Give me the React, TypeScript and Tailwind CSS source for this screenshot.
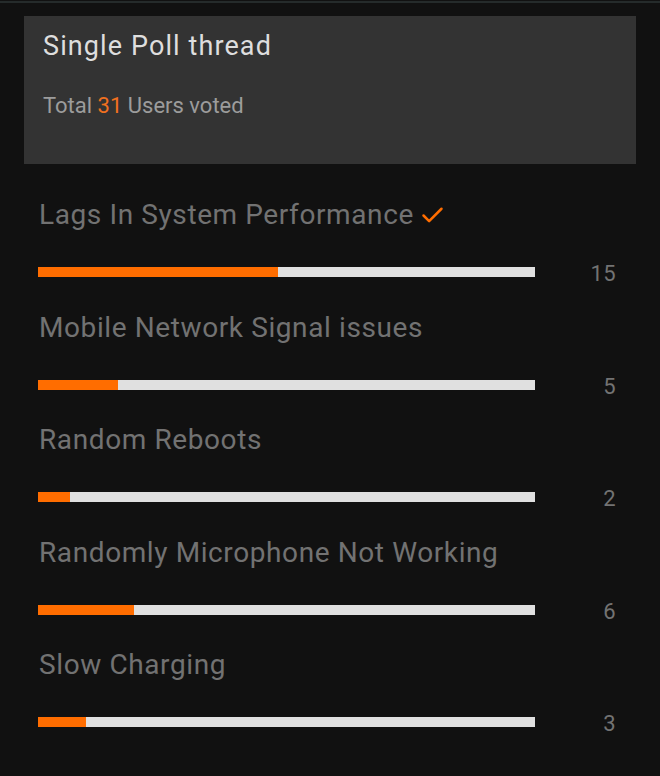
import { Check } from "lucide-react";

const OPTIONS = [
  { label: "Lags In System Performance", votes: 15, voted: true },
  { label: "Mobile Network Signal issues", votes: 5, voted: false },
  { label: "Random Reboots", votes: 2, voted: false },
  { label: "Randomly Microphone Not Working", votes: 6, voted: false },
  { label: "Slow Charging", votes: 3, voted: false },
];

const TOTAL = 31;

export default function App() {
  return (
    <div className="h-[776px] w-[660px] overflow-hidden bg-[#111111] pt-px font-['Roboto',sans-serif]">
      <div className="h-[2px] bg-[#252b2b]" />

      <div className="mx-[24px] mt-[13px] h-[148px] bg-[#333333] px-[19px] pt-[15px]">
        <h1 className="text-[27px] leading-[31px] tracking-[1.1px] text-[#dedede]">Single Poll thread</h1>
        <p className="mt-[31px] text-[22px] leading-[26px] text-[#9c9c9c]">
          Total <span className="text-[#f07020]">31</span> Users voted
        </p>
      </div>

      <div className="mt-[34px] px-[38px]">
        {OPTIONS.map((opt) => (
          <div key={opt.label} className="h-[112.5px]">
            <div className="flex items-center gap-[5px] pl-px text-[28px] leading-[34px] tracking-[0.6px] text-[#727272]">
              {opt.label}
              {opt.voted && <Check className="h-[27px] w-[27px] text-[#ff6d00]" strokeWidth={2.2} />}
            </div>
            <div className="mt-[27px] flex items-center">
              <div className="h-[10px] w-[497px] bg-[#e0e0e0]">
                <div className="h-full bg-[#ff6d00]" style={{ width: `${(opt.votes / TOTAL) * 100}%` }} />
              </div>
              <span className="ml-auto mr-[6px] translate-y-[2px] text-[22px] leading-[26px] tracking-[0.4px] text-[#737373]">
                {opt.votes}
              </span>
            </div>
          </div>
        ))}
      </div>
    </div>
  );
}
